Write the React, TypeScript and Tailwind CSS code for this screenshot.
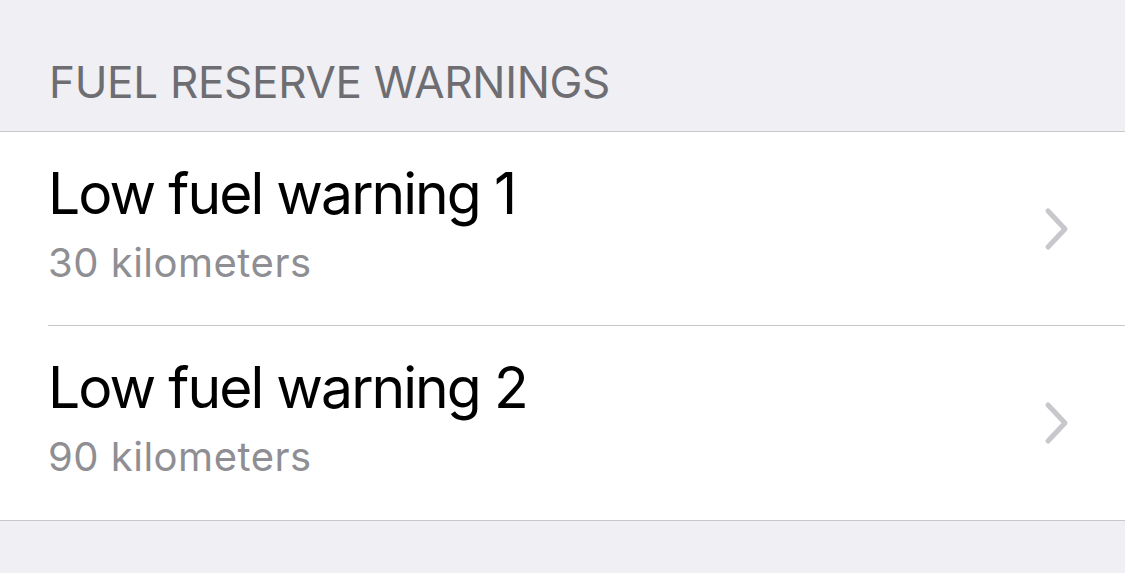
import React from "react";

function Chevron() {
  return (
    <svg width="30" height="44" viewBox="0 0 30 44" fill="none" className="shrink-0">
      <path d="M5 4 L22 22 L5 40" stroke="#c7c7cc" strokeWidth="5" strokeLinecap="round" strokeLinejoin="round" />
    </svg>
  );
}

function Row({ title, sub, last }: { title: string; sub: string; last?: boolean }) {
  return (
    <div className="relative flex h-[194px] pl-[48px] pr-[52px]">
      <div className="flex flex-1 flex-col pt-[33px]">
        <div className="text-[57px] leading-[57px] text-black tracking-[-1.95px]">{title}</div>
        <div className="mt-[21px] text-[40px] leading-[40px] text-[#8e8e93] tracking-[0.5px]">{sub}</div>
      </div>
      <div className="flex items-center pb-[1px]">
        <Chevron />
      </div>
      {!last && <div className="absolute bottom-0 left-[48px] right-0 h-px bg-[#c8c7cc]" />}
    </div>
  );
}

export default function App() {
  return (
    <div className="h-[573px] w-[1125px] overflow-hidden bg-[#efeff4]" style={{ fontFamily: "Inter, 'Noto Sans', sans-serif" }}>
      <div className="flex h-[131px] items-end pb-[27px] pl-[49px]">
        <div className="text-[44px] leading-[44px] text-[#6d6d72] tracking-[-0.3px]">FUEL RESERVE WARNINGS</div>
      </div>
      <div className="border-y border-[#c8c7cc] bg-white">
        <Row title="Low fuel warning 1" sub="30 kilometers" />
        <Row title="Low fuel warning 2" sub="90 kilometers" last />
      </div>
    </div>
  );
}
